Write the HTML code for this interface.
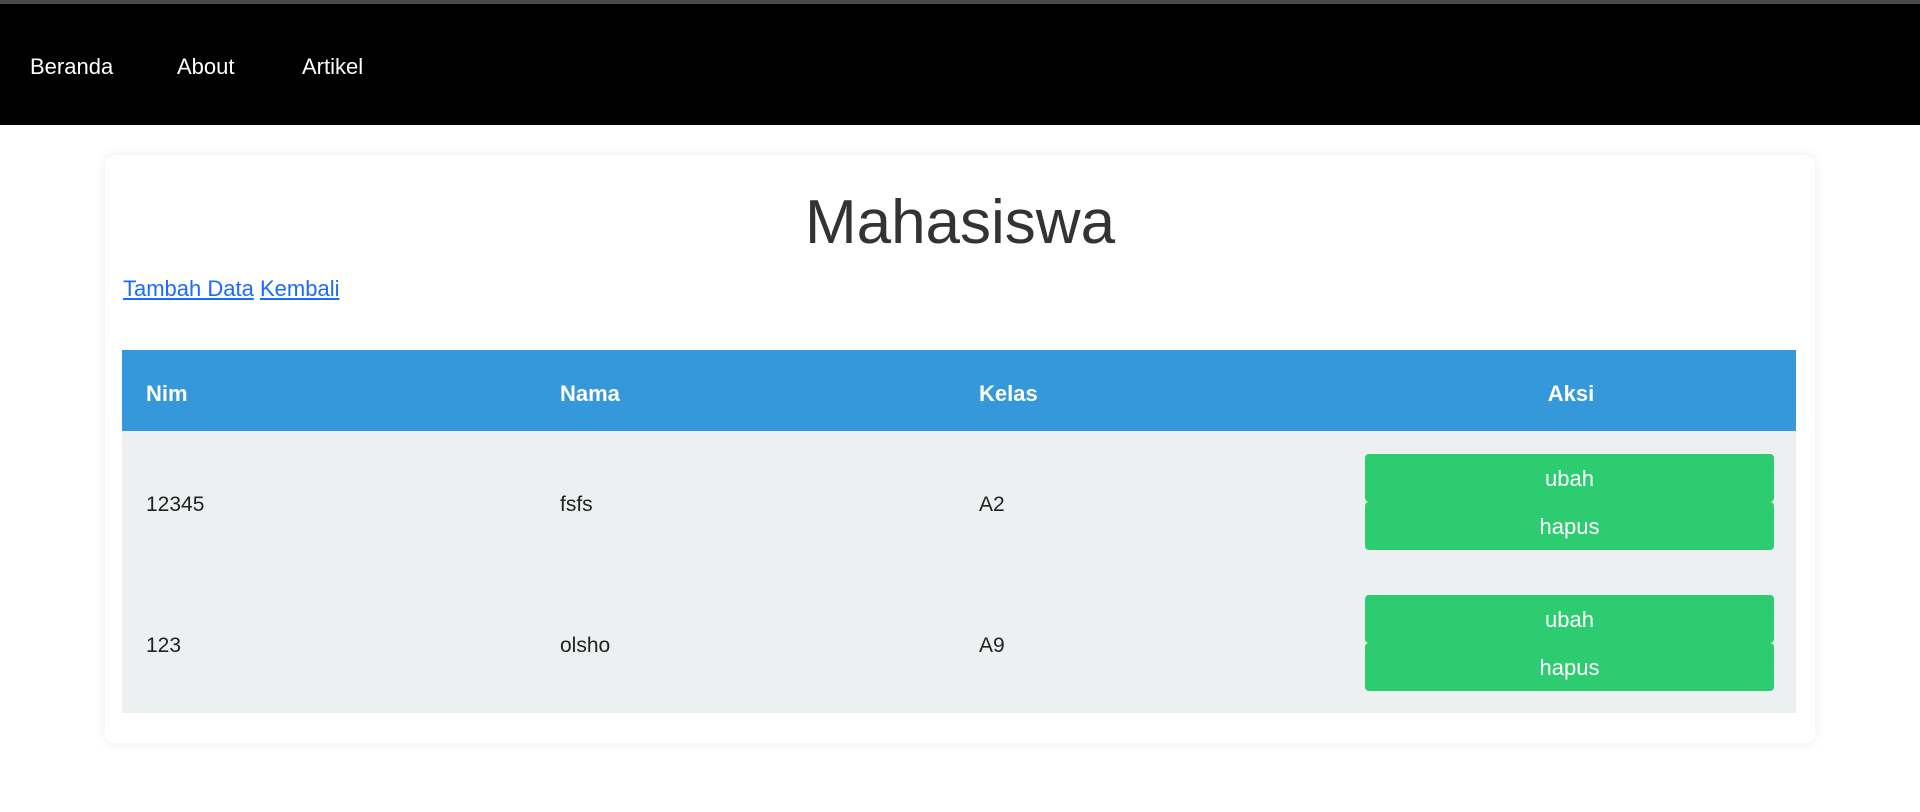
<!DOCTYPE html>
<html><head><style>
*{box-sizing:border-box;margin:0;padding:0}
body{width:1920px;height:812px;background:#fff;font-family:"Liberation Sans",sans-serif;overflow:hidden;position:relative}
.top{position:absolute;left:0;top:0;width:1920px;height:4px;background:#4a4a4a}
nav{position:absolute;left:0;top:4px;width:1920px;height:121px;background:#000}
nav a{position:absolute;top:50px;color:#fff;font-size:22px;text-decoration:none}
.card{position:absolute;left:105px;top:155px;width:1710px;height:588px;background:#fff;border-radius:10px;box-shadow:0 0 12px rgba(0,0,0,0.08)}
h1{position:absolute;left:0;width:100%;top:188px;text-align:center;font-size:62px;font-weight:normal;color:#333;line-height:70px}
.links{position:absolute;left:123px;top:276px;font-size:22px}
.links a{color:#1a6bff}
table{position:absolute;left:122px;top:350px;width:1674px;border-collapse:collapse;font-size:21px;table-layout:fixed}
th{background:#3498db;color:#fff;height:81px;text-align:left;padding-left:24px;padding-top:6px;font-size:22px}
td{background:#ecf0f1;color:#222;height:141px;padding-left:24px;padding-top:6px}
td.a{padding-top:0;padding-left:19px}
.btn{display:block;width:409px;height:48px;background:#2ecc71;color:#fff;border-radius:4px;text-align:center;line-height:50px;font-size:22px}
</style></head><body>
<div class="top"></div>
<nav><a style="left:30px">Beranda</a><a style="left:177px">About</a><a style="left:302px">Artikel</a></nav>
<div class="card"></div>
<h1>Mahasiswa</h1>
<div class="links"><a href="#">Tambah Data</a> <a href="#">Kembali</a></div>
<table>
<colgroup><col style="width:414px"><col style="width:419px"><col style="width:391px"><col style="width:450px"></colgroup>
<tr><th>Nim</th><th>Nama</th><th>Kelas</th><th style="text-align:center;padding-left:0">Aksi</th></tr>
<tr><td>12345</td><td>fsfs</td><td>A2</td><td class="a"><span class="btn">ubah</span><span class="btn">hapus</span></td></tr>
<tr><td>123</td><td>olsho</td><td>A9</td><td class="a"><span class="btn">ubah</span><span class="btn">hapus</span></td></tr>
</table>
</body></html>
